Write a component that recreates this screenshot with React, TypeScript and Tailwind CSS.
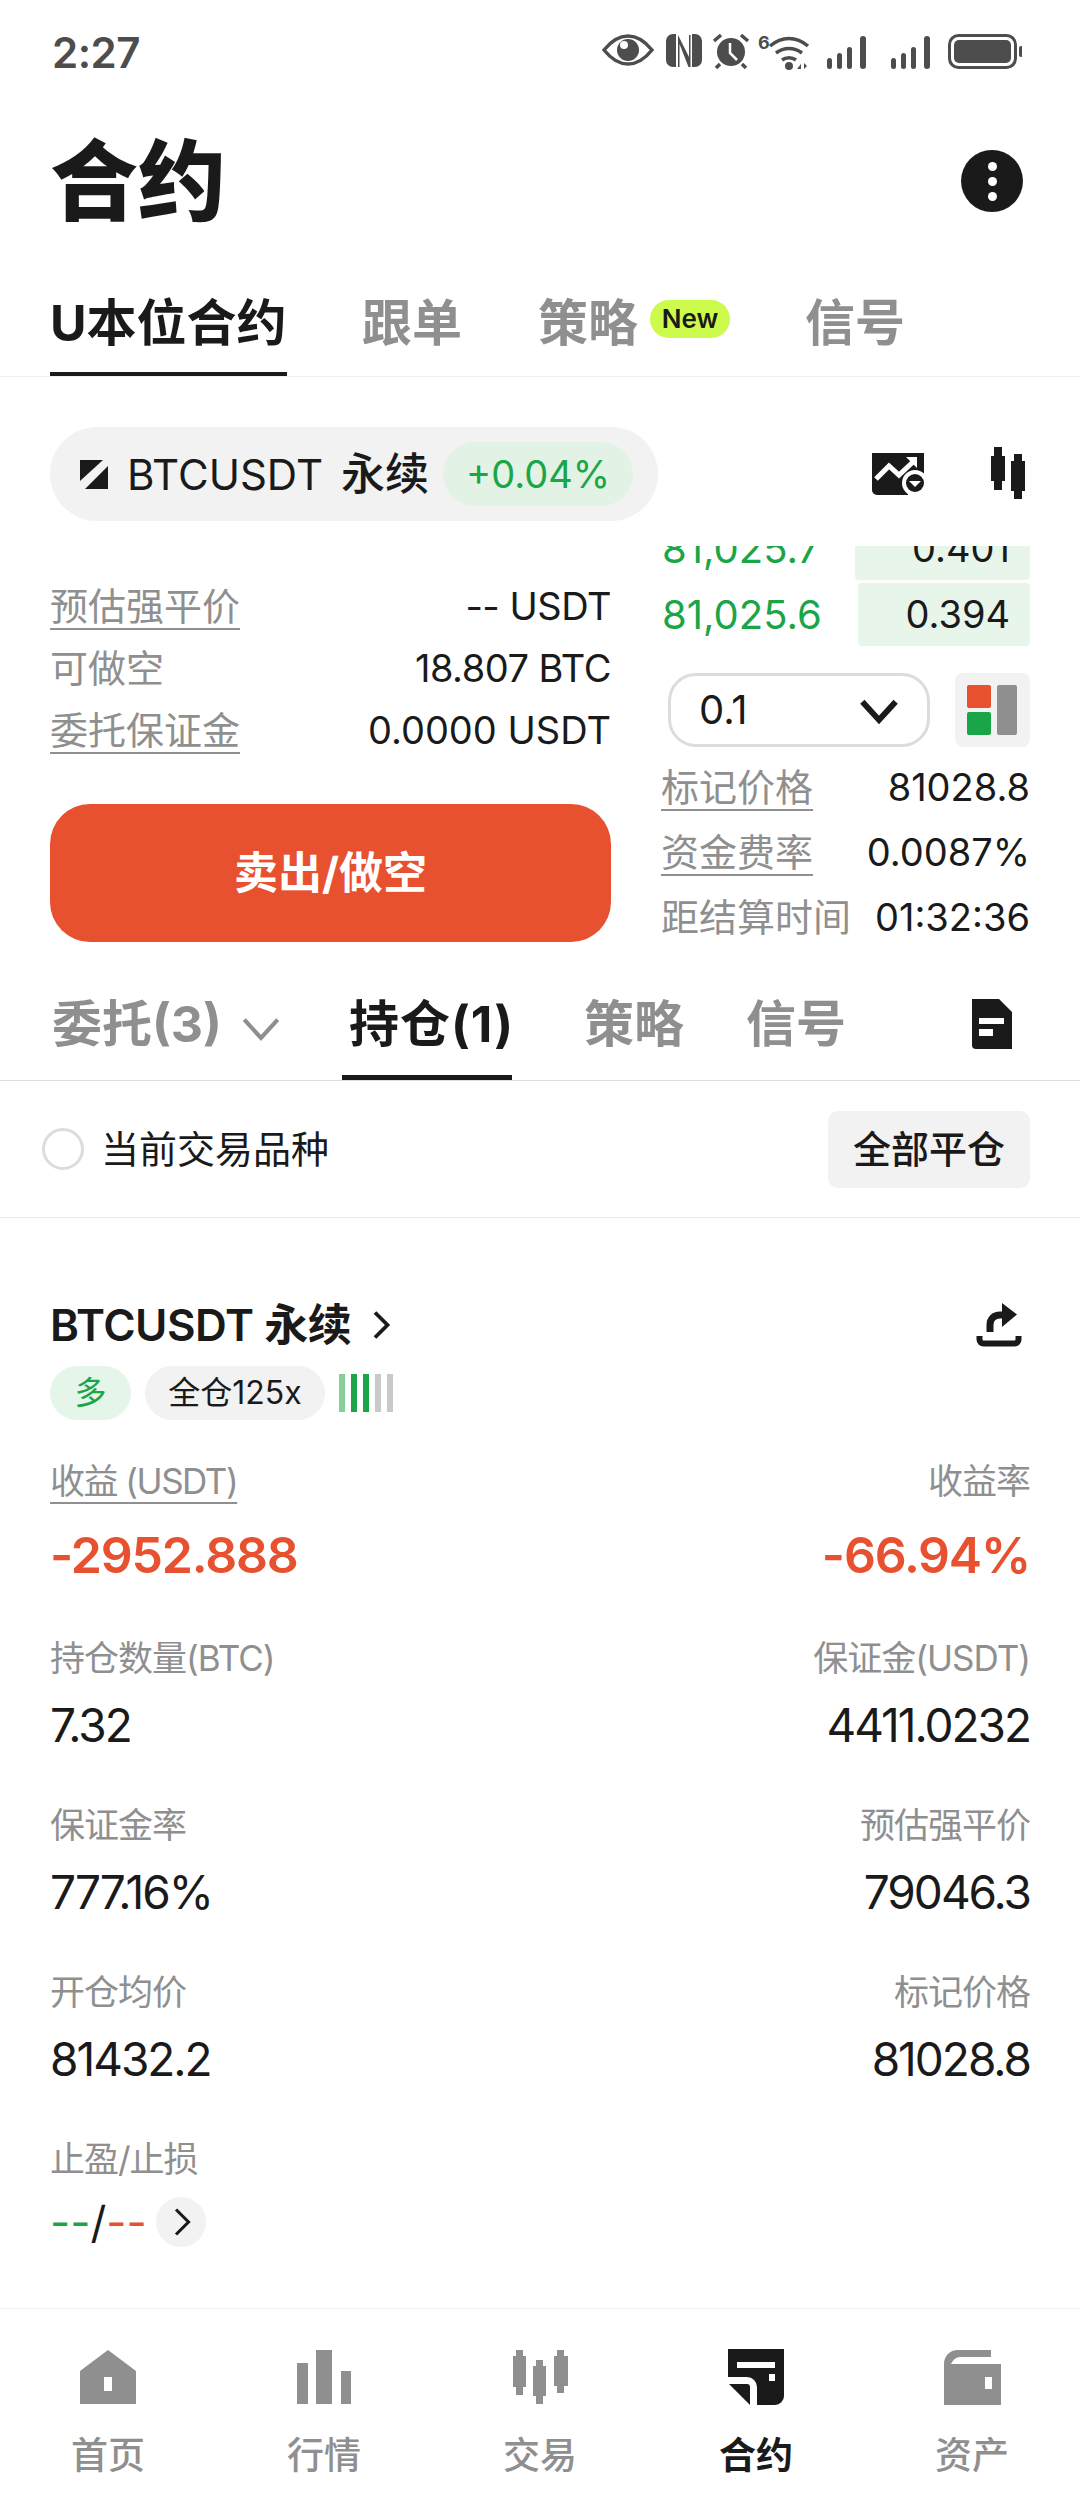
const FONT = "font-['Inter','Noto_Sans_CJK_SC',sans-serif]";

function StatusIcons() {
  return (
    <svg width="420" height="40" viewBox="0 0 420 40" fill="#4d4d4d" className="mr-[58px]">
      {/* eye */}
      <path d="M2 18C10 8 18 4 26 4s16 4 24 14c-8 10-16 14-24 14S10 28 2 18Z" fill="none" stroke="#4d4d4d" strokeWidth="3.5" />
      <circle cx="26" cy="18" r="11" />
      <circle cx="22" cy="13" r="4" fill="#fff" />
      {/* nfc */}
      <path d="M64 9a7 7 0 0 1 7-7h3v33h-3a7 7 0 0 1-7-7ZM90 2h3a7 7 0 0 1 7 7v19a7 7 0 0 1-7 7h-3Z" />
      <path d="M76 3l11 22V3h1.500v32h-2L77.500 12V35H76Z" />
      {/* alarm */}
      <circle cx="129" cy="20" r="14" />
      <path d="M128 11v10l7 7" fill="none" stroke="#fff" strokeWidth="2.5" />
      <path d="M112 9l7-6M146 9l-7-6M118 32l-4 4M140 32l4 4" stroke="#4d4d4d" strokeWidth="3.5" fill="none" />
      {/* wifi */}
      <text x="156" y="17" fontSize="18" fontWeight="700" fontFamily="Inter, sans-serif">6</text>
      <path d="M168 14c12-10 26-10 38 0M174 21c8-6 18-6 26 0M180 28c4-3 10-3 14 0" fill="none" stroke="#4d4d4d" strokeWidth="3.5" />
      <circle cx="187" cy="34" r="4" />
      <path d="M195 37l4-5v5ZM202 31l3 3-3 3Z" />
      {/* signal */}
      <rect x="225" y="26" width="5" height="11" rx="2.5" />
      <rect x="235" y="21" width="5" height="16" rx="2.5" />
      <rect x="245" y="15" width="5" height="22" rx="2.5" />
      <rect x="258" y="4" width="6" height="33" rx="3" />
      <rect x="289" y="26" width="5" height="11" rx="2.5" />
      <rect x="299" y="21" width="5" height="16" rx="2.5" />
      <rect x="309" y="15" width="5" height="22" rx="2.5" />
      <rect x="322" y="4" width="6" height="33" rx="3" />
      {/* battery */}
      <rect x="347.5" y="3.5" width="66" height="32" rx="9" fill="none" stroke="#4d4d4d" strokeWidth="3" />
      <rect x="352" y="8" width="57" height="23" rx="5" />
      <rect x="417" y="14" width="4" height="11" rx="2" />
    </svg>
  );
}

function PairLogo() {
  return (
    <svg width="28" height="29" viewBox="0 0 28 29" fill="#1a1a1a" className="shrink-0">
      <path d="M0 0H23L0 21Z" />
      <path d="M28 6V29H5Z" />
    </svg>
  );
}

function ChartIcon() {
  return (
    <svg width="52" height="42" viewBox="0 0 52 42" className="shrink-0">
      <path d="M0 0H52V32H36V42H5a5 5 0 0 1-5-5Z" fill="#1a1a1a" />
      <path d="M4 26l13-13 10 9L42 8" fill="none" stroke="#fff" strokeWidth="5" />
      <path d="M34 4h11v11Z" fill="#fff" />
      <circle cx="43" cy="30" r="13" fill="#fff" />
      <circle cx="43" cy="30" r="9" fill="#1a1a1a" />
      <path d="M37 28h12l-6 6Z" fill="#fff" />
    </svg>
  );
}

function CandleIcon({ color = "#1a1a1a" }: { color?: string }) {
  return (
    <svg width="36" height="54" viewBox="0 0 36 54" fill={color} className="shrink-0">
      <rect x="4" y="0" width="8" height="43" />
      <rect x="1" y="9" width="14" height="25" />
      <rect x="24" y="7" width="8" height="45" />
      <rect x="21" y="14" width="14" height="30" />
    </svg>
  );
}

function BookToggle() {
  return (
    <svg width="51" height="50" viewBox="0 0 51 50">
      <rect x="0" y="0" width="24" height="23" fill="#e85130" rx="2" />
      <rect x="0" y="27" width="24" height="23" fill="#1aa548" rx="2" />
      <rect x="30" y="0" width="20" height="50" fill="#8f8f8f" rx="2" />
    </svg>
  );
}

function Chevron({ size, color, width = 3, dir = "down" }: { size: number; color: string; width?: number; dir?: "down" | "right" }) {
  return (
    <svg width={size} height={size} viewBox="0 0 24 24" fill="none" stroke={color} strokeWidth={width} className="shrink-0">
      {dir === "down" ? <path d="M2 7l10 11L22 7" /> : <path d="M8 2l10 10L8 22" />}
    </svg>
  );
}

function DocIcon() {
  return (
    <svg width="40" height="50" viewBox="0 0 40 50" className="shrink-0">
      <path d="M0 0H27L40 13V50H4a4 4 0 0 1-4-4Z" fill="#1a1a1a" />
      <rect x="7" y="19" width="25" height="6" fill="#fff" />
      <rect x="7" y="30" width="14" height="7" fill="#fff" />
    </svg>
  );
}

function ShareIcon() {
  return (
    <svg width="46" height="44" viewBox="0 0 46 44" className="shrink-0">
      <path d="M3.500 33v3.500a4 4 0 0 0 4 4h31a4 4 0 0 0 4-4V33" fill="none" stroke="#1a1a1a" strokeWidth="6" />
      <path d="M14 29V22c0-6 4-10 10-10h5" fill="none" stroke="#1a1a1a" strokeWidth="7" />
      <path d="M26 0l15 11.500L26 24Z" fill="#1a1a1a" />
    </svg>
  );
}

function LeverageBars() {
  const colors = ["bg-[#86cf96]", "bg-[#1aa548]", "bg-[#1aa548]", "bg-[#c9c9c9]", "bg-[#c9c9c9]"];
  return (
    <div className="flex gap-[6px] ml-[14px]">
      {colors.map((c, i) => (
        <div key={i} className={`w-[6px] h-[38px] ${c}`} />
      ))}
    </div>
  );
}

function HomeIcon() {
  return (
    <svg width="56" height="54" viewBox="0 0 56 54">
      <path d="M28 0L56 21V54H0V21Z" fill="#8f8f8f" />
      <rect x="24" y="27" width="8" height="14" fill="#fff" />
    </svg>
  );
}
function MarketIcon() {
  return (
    <svg width="56" height="54" viewBox="0 0 56 54" fill="#8f8f8f">
      <rect x="1" y="13" width="11" height="41" />
      <rect x="20" y="0" width="16" height="54" />
      <rect x="45" y="21" width="10" height="33" />
    </svg>
  );
}
function TradeIcon() {
  return (
    <svg width="56" height="54" viewBox="0 0 56 54" fill="#8f8f8f">
      <rect x="4" y="0" width="7" height="45" />
      <rect x="1" y="6" width="13" height="31" />
      <rect x="24" y="10" width="7" height="44" />
      <rect x="21" y="16" width="13" height="30" />
      <rect x="45" y="0" width="7" height="43" />
      <rect x="42" y="6" width="14" height="30" />
    </svg>
  );
}
function ContractIcon() {
  return (
    <svg width="56" height="56" viewBox="0 0 56 56">
      <path d="M0 0H56V47a9 9 0 0 1-9 9H29V38a10 10 0 0 0-10-10H0Z" fill="#1a1a1a" />
      <path d="M1 35H19a3 3 0 0 1 3 3V56Z" fill="#1a1a1a" />
      <rect x="9" y="13" width="38" height="6" fill="#fff" />
      <rect x="41" y="25" width="6" height="7" fill="#fff" />
    </svg>
  );
}
function AssetIcon() {
  return (
    <svg width="57" height="55" viewBox="0 0 57 55">
      <path d="M0 55V14C0 6 6 0 14 0H47V7H16C12 7 9 10 7 14H57V55Z" fill="#8f8f8f" />
      <rect x="41" y="27" width="7" height="12" fill="#fff" />
    </svg>
  );
}

const navItems = [
  { label: "首页", icon: <HomeIcon /> },
  { label: "行情", icon: <MarketIcon /> },
  { label: "交易", icon: <TradeIcon /> },
  { label: "合约", icon: <ContractIcon />, active: true },
  { label: "资产", icon: <AssetIcon /> },
];

function Stat({ label, value, right }: { label: string; value: string; right?: boolean }) {
  return (
    <div className={right ? "flex flex-col items-end" : "flex flex-col items-start"}>
      <div className="text-[35px] leading-[44px] text-[#8f8f8f] tracking-[-1px]">{label}</div>
      <div className="text-[46px] leading-[60px] mt-[15px] text-[#1a1a1a] tracking-[-2px]">{value}</div>
    </div>
  );
}

export default function App() {
  return (
    <div className={`${FONT} w-[1080px] h-[2504px] bg-white flex flex-col overflow-hidden text-[#1a1a1a]`}>
      {/* status bar */}
      <div className="h-[104px] shrink-0 flex items-center justify-between pl-[52px]">
        <span className="text-[42px] font-semibold text-[#4d4d4d] tracking-[-0.5px]">2:27</span>
        <StatusIcons />
      </div>

      {/* header */}
      <div className="h-[148px] shrink-0 flex items-center justify-between pt-[6px] pl-[50px] pr-[57px]">
        <h1 className="text-[88px] leading-none font-black">合约</h1>
        <div className="w-[62px] h-[62px] rounded-full bg-[#1a1a1a] flex flex-col items-center justify-center gap-[6px]">
          <div className="w-[9px] h-[9px] rounded-full bg-white" />
          <div className="w-[9px] h-[9px] rounded-full bg-white" />
          <div className="w-[9px] h-[9px] rounded-full bg-white" />
        </div>
      </div>

      {/* top tabs */}
      <div className="h-[125px] shrink-0 flex items-end border-b border-[#f0f0f0] pl-[50px] text-[50px] leading-[70px] font-bold whitespace-nowrap">
        <div className="w-[237px] pb-[14px] border-b-4 border-[#1a1a1a]">U本位合约</div>
        <div className="pb-[18px] ml-[75px] w-[100px] text-[#8f8f8f]">跟单</div>
        <div className="pb-[18px] ml-[76px] w-[100px] text-[#8f8f8f]">策略</div>
        <div className="mb-[38px] ml-[12px] w-[80px] h-[38px] rounded-full bg-[#cdfb4b] text-[26px] leading-[38px] font-semibold text-center">New</div>
        <div className="pb-[18px] ml-[75px] text-[#8f8f8f]">信号</div>
      </div>

      {/* symbol bar */}
      <div className="h-[169px] shrink-0 pt-[50px] pl-[50px] pr-[50px]">
        <div className="flex items-start justify-between">
          <div className="w-[608px] h-[94px] rounded-full bg-[#f2f2f2] flex items-center pl-[30px]">
            <PairLogo />
            <span className="ml-[19px] text-[42px]">BTCUSDT</span>
            <span className="ml-[18px] text-[44px] font-medium">永续</span>
            <span className="ml-[14px] w-[190px] h-[64px] rounded-full bg-[#e2f2e5] text-[38px] leading-[64px] text-center text-[#1aa548]">+0.04%</span>
          </div>
          <div className="flex items-center h-[94px] gap-[66px] pr-[4px]">
            <ChartIcon />
            <CandleIcon />
          </div>
        </div>
      </div>

      {/* order panel */}
      <div className="h-[406px] shrink-0 flex pl-[50px] pr-[50px]">
        <div className="w-[561px] pt-[29px] shrink-0">
          <div className="h-[62px] flex items-center justify-between text-[38px]">
            <span className="text-[#8f8f8f] underline underline-offset-[8px] decoration-[2px]">预估强平价</span>
            <span className="tracking-[-0.5px]">-- USDT</span>
          </div>
          <div className="h-[62px] flex items-center justify-between text-[38px]">
            <span className="text-[#8f8f8f]">可做空</span>
            <span className="tracking-[-0.5px]">18.807 BTC</span>
          </div>
          <div className="h-[62px] flex items-center justify-between text-[38px]">
            <span className="text-[#8f8f8f] underline underline-offset-[8px] decoration-[2px]">委托保证金</span>
            <span>0.0000 USDT</span>
          </div>
          <button className="mt-[43px] w-full h-[138px] rounded-[40px] bg-[#e85130] text-white text-[44px] font-bold">卖出/做空</button>
        </div>
        <div className="ml-[51px] flex-1 min-w-0">
          <div className="h-[100px] overflow-hidden flex flex-col justify-end gap-[3px]">
            <div className="shrink-0 h-[63px] flex items-center justify-between text-[38px]">
              <span className="text-[40px] text-[#1aa548]">81,025.7</span>
              <span className="w-[175px] h-full bg-[#e8f5ea] text-right pr-[20px] leading-[63px] rounded-[4px]">0.401</span>
            </div>
            <div className="shrink-0 h-[63px] flex items-center justify-between text-[38px]">
              <span className="text-[40px] text-[#1aa548]">81,025.6</span>
              <span className="w-[172px] h-full bg-[#e8f5ea] text-right pr-[20px] leading-[63px] rounded-[4px]">0.394</span>
            </div>
          </div>
          <div className="mt-[27px] flex justify-between pl-[6px]">
            <div className="w-[262px] h-[74px] rounded-[28px] border-[3px] border-[#dcdcdc] flex items-center justify-between pl-[28px] pr-[28px] text-[40px]">
              <span>0.1</span>
              <Chevron size={40} color="#1a1a1a" width={3.5} />
            </div>
            <div className="w-[75px] h-[74px] rounded-[8px] bg-[#f2f2f2] flex items-center justify-center">
              <BookToggle />
            </div>
          </div>
          <div className="mt-[7px] h-[66px] flex items-center justify-between text-[38px]">
            <span className="-ml-[1px] text-[#8f8f8f] underline underline-offset-[8px] decoration-[2px]">标记价格</span>
            <span>81028.8</span>
          </div>
          <div className="h-[65px] flex items-center justify-between text-[38px]">
            <span className="-ml-[1px] text-[#8f8f8f] underline underline-offset-[8px] decoration-[2px]">资金费率</span>
            <span>0.0087%</span>
          </div>
          <div className="h-[65px] flex items-center justify-between text-[38px]">
            <span className="-ml-[1px] text-[#8f8f8f]">距结算时间</span>
            <span>01:32:36</span>
          </div>
        </div>
      </div>

      {/* position tabs */}
      <div className="h-[129px] shrink-0 flex items-end border-b border-[#dddddd] pl-[52px] pr-[68px] text-[50px] leading-[70px] font-bold whitespace-nowrap">
        <div className="w-[169px] pb-[21px] text-[#8f8f8f]">委托(3)</div>
        <div className="pb-[32px] ml-[20px] mr-[61px]">
          <Chevron size={40} color="#8f8f8f" width={2.5} />
        </div>
        <div className="w-[170px] pb-[16px] pl-[7px] border-b-[5px] border-[#1a1a1a] tracking-[1px]">持仓(1)</div>
        <div className="pb-[21px] ml-[72px] w-[100px] text-[#8f8f8f]">策略</div>
        <div className="pb-[21px] ml-[62px] text-[#8f8f8f]">信号</div>
        <div className="ml-auto pb-[31px]">
          <DocIcon />
        </div>
      </div>

      {/* filter row */}
      <div className="h-[137px] shrink-0 flex items-center justify-between border-b border-[#e8e8e8] pl-[42px] pr-[50px]">
        <div className="flex items-center gap-[17px]">
          <div className="w-[42px] h-[42px] rounded-full border-[3px] border-[#dcdcdc]" />
          <span className="text-[38px]">当前交易品种</span>
        </div>
        <div className="w-[202px] h-[77px] rounded-[10px] bg-[#f2f2f2] text-[38px] leading-[77px] text-center font-medium">全部平仓</div>
      </div>

      {/* position card */}
      <div className="flex-1 min-h-0 pt-[77px] px-[50px]">
        <div className="h-[60px] flex items-center justify-between">
          <div className="flex items-center">
            <span className="text-[44px] font-semibold tracking-[-0.5px]">BTCUSDT 永续</span>
            <span className="ml-[14px]">
              <Chevron size={30} color="#1a1a1a" width={3} dir="right" />
            </span>
          </div>
          <div className="mr-[8px]">
            <ShareIcon />
          </div>
        </div>
        <div className="mt-[11px] h-[54px] flex items-center">
          <div className="w-[81px] h-[54px] rounded-full bg-[#e6f5e9] text-[#1aa548] text-[32px] leading-[54px] text-center">多</div>
          <div className="ml-[14px] w-[180px] h-[54px] rounded-full bg-[#f2f2f2] text-[32px] leading-[54px] text-center">全仓125x</div>
          <LeverageBars />
        </div>

        <div className="mt-[39px] flex justify-between text-[35px] leading-[44px] text-[#8f8f8f] tracking-[-1px]">
          <span className="underline underline-offset-[8px] decoration-[2px] tracking-[-1.500px]">收益 (USDT)</span>
          <span>收益率</span>
        </div>
        <div className="mt-[20px] flex justify-between text-[50px] leading-[64px] font-semibold text-[#e85130] tracking-[-1.200px]">
          <span>-2952.888</span>
          <span>-66.94%</span>
        </div>

        <div className="mt-[49px] grid grid-cols-2 gap-y-[48px]">
          <Stat label="持仓数量(BTC)" value="7.32" />
          <Stat label="保证金(USDT)" value="4411.0232" right />
          <Stat label="保证金率" value="777.16%" />
          <Stat label="预估强平价" value="79046.3" right />
          <Stat label="开仓均价" value="81432.2" />
          <Stat label="标记价格" value="81028.8" right />
        </div>

        <div className="mt-[48px] text-[35px] leading-[44px] text-[#8f8f8f] tracking-[-1px]">止盈/止损</div>
        <div className="mt-[16px] h-[50px] flex items-center">
          <span className="w-[90px] text-[44px] whitespace-nowrap">
            <span className="text-[#1aa548]">--</span>/<span className="text-[#e85130]">--</span>
          </span>
          <div className="ml-[16px] w-[50px] h-[50px] rounded-full bg-[#f2f2f2] flex items-center justify-center">
            <Chevron size={30} color="#1a1a1a" width={2.5} dir="right" />
          </div>
        </div>
      </div>

      {/* bottom nav */}
      <div className="h-[196px] shrink-0 border-t border-[#f0f0f0] pt-[41px] grid grid-cols-5">
        {navItems.map((item) => (
          <div key={item.label} className="flex flex-col items-center">
            <div className="h-[54px] flex items-center justify-center">{item.icon}</div>
            <div className={`mt-[27px] text-[37px] leading-[50px] ${item.active ? "text-[#1a1a1a] font-bold" : "text-[#8f8f8f] font-medium"}`}>
              {item.label}
            </div>
          </div>
        ))}
      </div>
    </div>
  );
}
